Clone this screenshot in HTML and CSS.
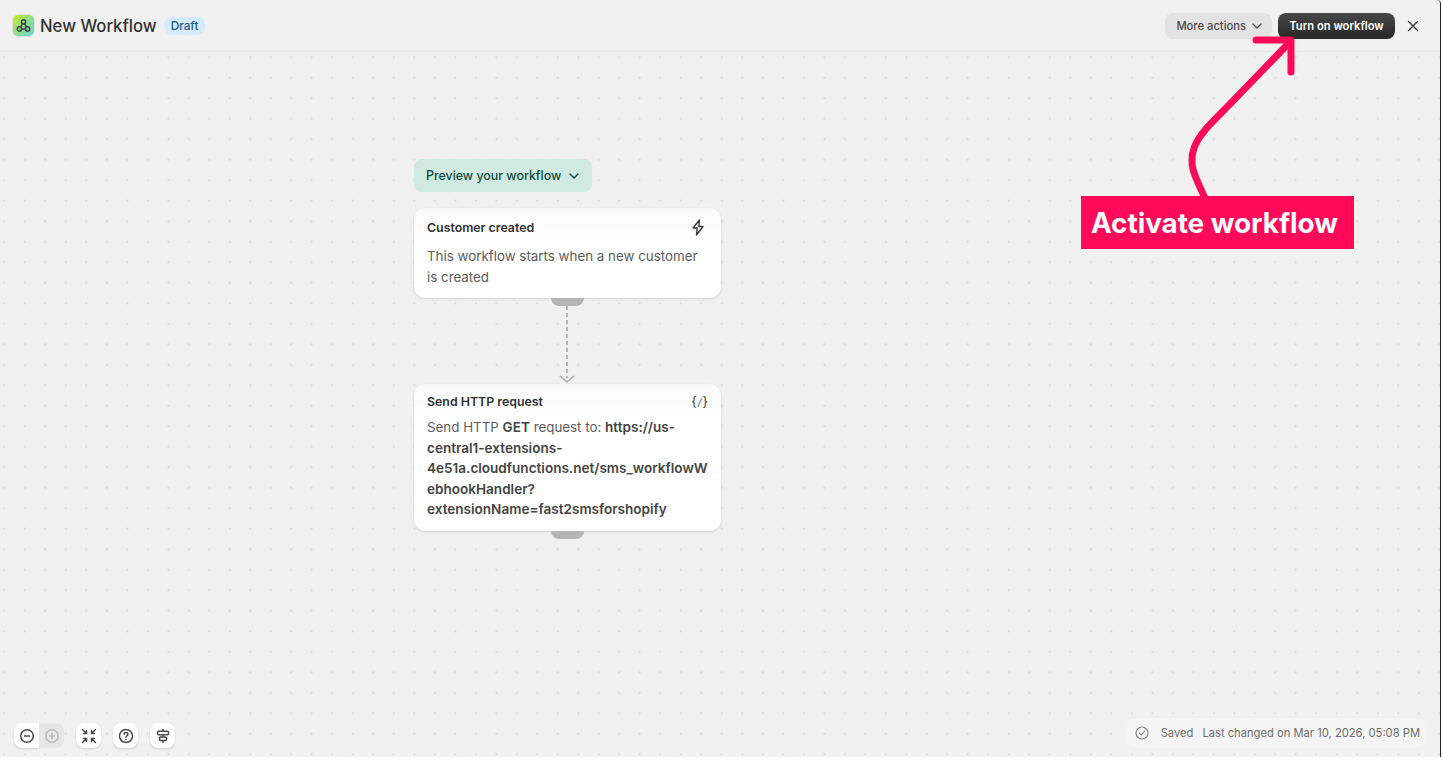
FILE: index.html
```html
<!DOCTYPE html>
<html lang="en">
<head>
    <meta charset="UTF-8">
    <meta name="viewport" content="width=device-width, initial-scale=1.0">
    <title>New Workflow</title>
    <link rel="stylesheet" href="styles.css">
</head>
<body>
    <div class="frame">
        <header class="topbar">
            <div class="title-group">
                <div class="app-icon">
                    <svg width="15" height="15" viewBox="0 0 14 14" fill="none" stroke="#3a3a3a" stroke-width="1.3">
                        <circle cx="7" cy="3.6" r="2"/>
                        <circle cx="3.2" cy="10.2" r="2"/>
                        <circle cx="10.8" cy="10.2" r="2"/>
                        <path d="M6 5.4 4.2 8.4M8 5.4l1.8 3M5.2 10.2h3.6"/>
                    </svg>
                </div>
                <h1 class="title">New Workflow</h1>
                <span class="badge">Draft</span>
            </div>
            <div class="actions">
                <button class="btn-more">More actions
                    <svg width="12" height="12" viewBox="0 0 12 12" fill="none" stroke="#4a4a4a" stroke-width="1.3" stroke-linecap="round" stroke-linejoin="round"><path d="m2 4 4 4 4-4"/></svg>
                </button>
                <button class="btn-primary">Turn on workflow</button>
                <button class="btn-close" aria-label="Close">
                    <svg width="12" height="12" viewBox="0 0 12 12" fill="none" stroke="#3a3a3a" stroke-width="1.4" stroke-linecap="round"><path d="m1.5 1.5 9 9M10.5 1.5l-9 9"/></svg>
                </button>
            </div>
        </header>

        <main class="canvas">
            <div class="flow">
                <button class="btn-preview">Preview your workflow
                    <svg width="12" height="12" viewBox="0 0 12 12" fill="none" stroke="#0f4a3c" stroke-width="1.5" stroke-linecap="round" stroke-linejoin="round"><path d="m2 4 4 4 4-4"/></svg>
                </button>

                <section class="card card-trigger">
                    <div class="card-head">
                        <span class="card-title">Customer created</span>
                        <svg class="bolt" width="14" height="17" viewBox="0 0 14 17" fill="none" stroke="#3a3a3a" stroke-width="1.4" stroke-linejoin="round"><path d="M8.5 1 2 9h4.2L5.5 16 12 7.5H7.8z"/></svg>
                    </div>
                    <p class="card-text">This workflow starts when a new customer is created</p>
                </section>
                <div class="stub"></div>

                <div class="connector">
                    <svg width="18" height="78" viewBox="0 0 18 78" fill="none" stroke="#8f8f8f">
                        <path d="M8 0v72" stroke-width="1.2" stroke-dasharray="4 3"/>
                        <path d="m1 70 7 6 7-6" stroke="#a8a8a8" stroke-width="1.6"/>
                    </svg>
                </div>

                <section class="card card-action">
                    <div class="card-head">
                        <span class="card-title">Send HTTP request</span>
                        <span class="code-icon">{<i>/</i>}</span>
                    </div>
                    <p class="card-text">Send HTTP <b>GET</b> request to: <b>https://us-central1-extensions-4e51a.cloudfunctions.net/sms_workflowWebhookHandler?extensionName=fast2smsforshopify</b></p>
                </section>
                <div class="stub"></div>
            </div>

            <!-- annotation drawn over the page -->
            <svg class="arrow" width="120" height="170" viewBox="0 0 120 170" fill="none" stroke="#ff0a5a" stroke-width="7" stroke-linecap="round" stroke-linejoin="round">
                <path d="M22 160C14 142 6 130 12 112 17 98 30 86 48 68L106 8"/>
                <path d="M74 4H109V36" />
            </svg>
            <div class="callout">Activate workflow</div>

            <div class="tools">
                <div class="zoom-group">
                    <button class="tool tool-left">
                        <svg width="16" height="16" viewBox="0 0 16 16" fill="none" stroke="#4a4a4a" stroke-width="1.5"><circle cx="8" cy="8" r="6.3"/><path d="M5 8h6"/></svg>
                    </button>
                    <button class="tool tool-right">
                        <svg width="16" height="16" viewBox="0 0 16 16" fill="none" stroke="#b9b9b9" stroke-width="1.5"><circle cx="8" cy="8" r="6.3"/><path d="M5 8h6M8 5v6"/></svg>
                    </button>
                </div>
                <button class="tool">
                    <svg width="16" height="16" viewBox="0 0 16 16" fill="none" stroke="#4a4a4a" stroke-width="1.5" stroke-linecap="round"><path d="M1.5 1.5 5.5 5.5M5.5 2.5v3h-3M14.5 1.5l-4 4M10.5 2.5v3h3M1.5 14.5l4-4M5.5 13.5v-3h-3M14.5 14.5l-4-4M10.5 13.5v-3h3"/></svg>
                </button>
                <button class="tool">
                    <svg width="16" height="16" viewBox="0 0 16 16" fill="none" stroke="#4a4a4a" stroke-width="1.5" stroke-linecap="round"><circle cx="8" cy="8" r="6.5"/><path d="M6 6.2C6 5 7 4.4 8 4.4S10 5 10 6.2 8 7.8 8 9.2"/><path d="M8 11.4v.2"/></svg>
                </button>
                <button class="tool">
                    <svg width="16" height="16" viewBox="0 0 16 16" fill="none" stroke="#4a4a4a" stroke-width="1.5" stroke-linejoin="round"><path d="M8 1v14"/><rect x="2.5" y="3.2" width="11" height="3.6" rx="1.2" fill="#fff"/><rect x="4.5" y="9" width="7" height="3.6" rx="1.2" fill="#fff"/></svg>
                </button>
            </div>

            <div class="status">
                <svg width="14" height="14" viewBox="0 0 14 14" fill="none" stroke="#8a8a8a" stroke-width="1.2" stroke-linecap="round" stroke-linejoin="round"><circle cx="7" cy="7" r="6"/><path d="m4.5 7.2 1.8 1.7 3.2-3.6"/></svg>
                <span class="status-saved">Saved</span>
                <span>Last changed on Mar 10, 2026, 05:08 PM</span>
            </div>
        </main>
    </div>
</body>
</html>
```

FILE: styles.css
```css
* {
    margin: 0;
    padding: 0;
    box-sizing: border-box;
    font-family: 'Inter', 'Liberation Sans', sans-serif;
}

body {
    background-color: #fff;
    width: 1443px;
    height: 763px;
    overflow: hidden;
}

button {
    border: none;
    font-size: 11.2px;
    cursor: pointer;
}

.frame {
    width: 1441px;
    height: 757px;
    background-color: #f1f1f1;
    border-right: 1px solid #222;
    border-top-right-radius: 4px;
    display: flex;
    flex-direction: column;
}

/* Top bar */
.topbar {
    height: 52px;
    flex-shrink: 0;
    display: flex;
    align-items: center;
    justify-content: space-between;
    padding: 0 21px 0 13px;
    border-bottom: 1px solid #e9e9e9;
}

.title-group {
    display: flex;
    align-items: center;
}

.app-icon {
    width: 21px;
    height: 21px;
    border-radius: 5px;
    background: linear-gradient(135deg, #c8ea20 0%, #8fdc8c 50%, #6bd7d8 100%);
    box-shadow: 0 0 0 1px rgba(0, 0, 0, 0.06);
    display: flex;
    align-items: center;
    justify-content: center;
    margin-right: 6px;
}

.title {
    font-size: 16.7px;
    font-weight: 500;
    color: #303030;
    margin-right: 7px;
}

.badge {
    font-size: 11.8px;
    font-weight: 500;
    color: #1f5a85;
    background-color: #d5ebff;
    border-radius: 8px;
    padding: 2px 7px;
}

.actions {
    display: flex;
    align-items: center;
}

.btn-more {
    display: flex;
    align-items: center;
    gap: 5px;
    height: 26px;
    padding: 0 9px 0 11px;
    background-color: #e3e3e3;
    color: #4a4a4a;
    border-radius: 8px;
    font-weight: 500;
    margin-right: 6px;
}

.btn-primary {
    height: 26px;
    width: 117px;
    background: linear-gradient(#484848, #262626);
    color: #fff;
    border-radius: 8px;
    font-weight: 600;
    margin-right: 12px;
}

.btn-close {
    display: flex;
    background: none;
}

/* Canvas */
.canvas {
    flex: 1;
    position: relative;
    background-image: radial-gradient(circle, #dcdcdc 0.9px, transparent 1.2px);
    background-size: 20.5px 20.5px;
    background-position: -6px -5px;
}

.flow {
    position: absolute;
    top: 107px;
    left: 414px;
    width: 307px;
    display: flex;
    flex-direction: column;
}

.btn-preview {
    align-self: flex-start;
    display: flex;
    align-items: center;
    gap: 7px;
    height: 33px;
    padding: 0 12px;
    background-color: #d0e9e1;
    color: #0f4a3c;
    border-radius: 8px;
    font-size: 12.4px;
    font-weight: 500;
    margin-bottom: 16px;
}

.card {
    background: linear-gradient(#fafafa, #fff 30px);
    border-radius: 12px;
    box-shadow: 0 1px 3px rgba(0, 0, 0, 0.12);
}

.card-trigger {
    padding: 10px 13px 11px;
}

.card-action {
    padding: 8px 13px 11px;
}

.card-head {
    display: flex;
    align-items: center;
    justify-content: space-between;
    height: 18px;
}

.card-trigger .card-head {
    margin-bottom: 10px;
}

.card-action .card-head {
    margin-bottom: 7px;
}

.card-title {
    font-size: 12.35px;
    font-weight: 600;
    color: #303030;
}

.card-text {
    font-size: 13.35px;
    line-height: 20.5px;
    color: #5c5c5c;
    overflow-wrap: anywhere;
}

.card-text b {
    font-size: 13.55px;
    font-weight: 600;
    color: #444;
}

.bolt {
    margin-right: 3px;
}

.code-icon {
    font-size: 13px;
    color: #3a3a3a;
}

.code-icon i {
    font-size: 10px;
    padding: 0 1px;
}

.stub {
    width: 33px;
    height: 8px;
    background-color: #b5b5b5;
    border-radius: 0 0 8px 8px;
    align-self: center;
}

.connector {
    height: 78px;
    align-self: center;
    display: flex;
}

/* Annotation */
.arrow {
    position: absolute;
    top: -16px;
    left: 1182px;
}

.callout {
    position: absolute;
    top: 144px;
    left: 1081px;
    width: 273px;
    height: 53px;
    background-color: #ff0a5a;
    color: #fff;
    font-size: 27.8px;
    font-weight: 700;
    line-height: 55px;
    padding-left: 10px;
    white-space: nowrap;
}

/* Bottom controls */
.tools {
    position: absolute;
    left: 14px;
    bottom: 9px;
    display: flex;
    gap: 12px;
}

.zoom-group {
    display: flex;
}

.tool {
    width: 25px;
    height: 25px;
    background-color: #fff;
    border-radius: 8px;
    display: flex;
    align-items: center;
    justify-content: center;
    box-shadow: 0 1px 2px rgba(0, 0, 0, 0.15);
}

.tool-left {
    border-radius: 8px 0 0 8px;
}

.tool-right {
    background-color: #e6e6e6;
    border-radius: 0 8px 8px 0;
    box-shadow: none;
}

.status {
    position: absolute;
    right: 15px;
    bottom: 9px;
    height: 30px;
    padding: 0 5px 0 8px;
    display: flex;
    align-items: center;
    background-color: #f5f5f5;
    border-radius: 8px;
    font-size: 11.2px;
    color: #6d6d6d;
}

.status svg {
    margin-right: 12px;
}

.status-saved {
    margin-right: 9px;
}
```
